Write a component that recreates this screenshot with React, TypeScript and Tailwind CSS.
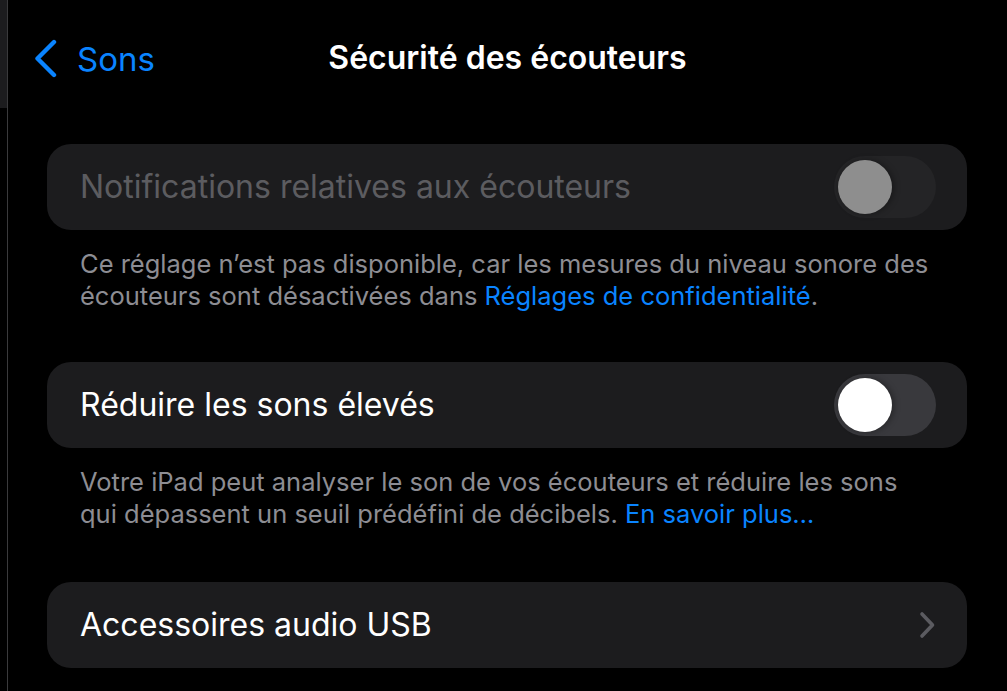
const Toggle = ({ disabled = false }: { disabled?: boolean }) => (
  <div
    className={`w-[102px] h-[62px] rounded-full p-[4px] flex items-center ${
      disabled ? 'bg-[#242426]' : 'bg-[#39393d]'
    }`}
  >
    <div
      className={`w-[54px] h-[54px] rounded-full shadow-[2px_0_6px_rgba(0,0,0,0.35)] ${
        disabled ? 'bg-[#8e8e8e]' : 'bg-white'
      }`}
    />
  </div>
);

const Footnote = ({ children }: { children: React.ReactNode }) => (
  <p className="mt-[18px] pl-[33px] pr-[35px] text-[25.5px] leading-[32px] text-[#8d8d93]">{children}</p>
);

export default function App() {
  return (
    <div
      className="w-[1007px] h-[691px] bg-black flex overflow-hidden"
      style={{ fontFamily: 'Inter, "Noto Sans", sans-serif' }}
    >
      <div className="w-[7px] shrink-0 flex flex-col">
        <div className="h-[108px] bg-[#1c1c1e]" />
      </div>
      <div className="w-px shrink-0 bg-[#3a3a3c]" />

      <div className="flex-1 flex flex-col">
        <div className="h-[118px] relative">
          <div className="absolute left-[26px] top-[39px] flex items-center text-[#0a84ff]">
            <svg width="24" height="40" viewBox="0 0 24 40" fill="none">
              <path d="M20 3 L3.5 19.5 L20 36" stroke="currentColor" strokeWidth="4.4" strokeLinecap="round" strokeLinejoin="round" />
            </svg>
            <span className="ml-[19px] text-[33px] leading-none">Sons</span>
          </div>
          <h1 className="absolute left-0 right-0 top-[42px] text-center text-white text-[32px] font-semibold leading-none">
            Sécurité des écouteurs
          </h1>
        </div>

        <div className="pl-[39px] pr-[40px] pt-[26px]">
          <div className="h-[86px] rounded-[24px] bg-[#1c1c1e] flex items-center justify-between pl-[33px] pr-[31px]">
            <span className="text-[32px] text-[#5c5c60]">Notifications relatives aux écouteurs</span>
            <Toggle disabled />
          </div>
          <Footnote>
            Ce réglage n’est pas disponible, car les mesures du niveau sonore des écouteurs sont désactivées dans{' '}
            <span className="text-[#0a84ff]">Réglages de confidentialité</span>.
          </Footnote>

          <div className="mt-[50px] h-[86px] rounded-[24px] bg-[#1c1c1e] flex items-center justify-between pl-[33px] pr-[31px]">
            <span className="text-[32px] text-white">Réduire les sons élevés</span>
            <Toggle />
          </div>
          <Footnote>
            Votre iPad peut analyser le son de vos écouteurs et réduire les sons qui dépassent un seuil prédéfini de décibels.{' '}
            <span className="text-[#0a84ff]">En savoir plus…</span>
          </Footnote>

          <div className="mt-[52px] h-[86px] rounded-[24px] bg-[#1c1c1e] flex items-center justify-between pl-[33px] pr-[31px]">
            <span className="text-[32px] text-white">Accessoires audio USB</span>
            <svg width="18" height="28" viewBox="0 0 18 28" fill="none">
              <path d="M4 3 L14.5 14 L4 25" stroke="#5b5b60" strokeWidth="3.6" strokeLinecap="round" strokeLinejoin="round" />
            </svg>
          </div>
        </div>
      </div>
    </div>
  );
}
